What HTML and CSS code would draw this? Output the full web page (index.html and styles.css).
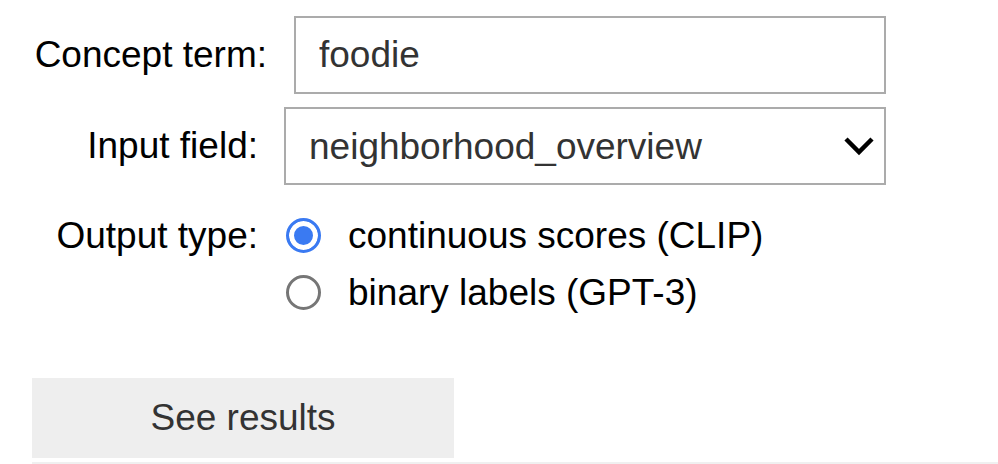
FILE: index.html
```html
<!DOCTYPE html>
<html>
<head>
<meta charset="utf-8">
<link rel="stylesheet" href="styles.css">
</head>
<body>
<div class="form">
  <div class="row">
    <label class="label label-wide" for="term">Concept term:</label>
    <input id="term" class="text-input" type="text" value="foodie">
  </div>
  <div class="row row-select">
    <label class="label" for="field">Input field:</label>
    <div class="select-wrap">
      <select id="field" class="select">
        <option>neighborhood_overview</option>
      </select>
      <svg class="chevron" width="32" height="20" viewBox="0 0 32 20"><path d="M3 3 L16 16 L29 3" fill="none" stroke="#000" stroke-width="4.5"/></svg>
    </div>
  </div>
  <div class="row row-radio">
    <span class="label label-radio">Output type:</span>
    <div class="radio-group">
      <label class="option"><input class="radio" type="radio" name="out" checked><span>continuous scores (CLIP)</span></label>
      <label class="option"><input class="radio" type="radio" name="out"><span>binary labels (GPT-3)</span></label>
    </div>
  </div>
  <button class="button">See results</button>
  <div class="divider"></div>
</div>
</body>
</html>
```
FILE: styles.css
```css
html, body {
  margin: 0;
  background: #fff;
}
body {
  font-family: "Liberation Sans", Arial, Helvetica, sans-serif;
  font-size: 37px;
  color: #000;
}
.form {
  padding: 16px 0 0 32px;
}
.row {
  display: flex;
  align-items: center;
}
.label {
  width: 226px;
  margin-right: 26px;
  text-align: right;
  white-space: nowrap;
  flex: none;
}
.label-wide {
  width: 235px;
  margin-right: 27px;
}
.text-input {
  box-sizing: border-box;
  width: 592px;
  height: 78px;
  border: 2px solid #ababab;
  border-radius: 0;
  padding: 0 23px;
  font: inherit;
  color: #333;
  outline: none;
}
.row-select {
  margin-top: 13px;
}
.select-wrap {
  position: relative;
}
.select {
  box-sizing: border-box;
  width: 602px;
  height: 78px;
  border: 2px solid #ababab;
  border-radius: 0;
  padding: 0 0 0 23px;
  font: inherit;
  color: #333;
  background: #fff;
  -webkit-appearance: none;
  appearance: none;
  outline: none;
}
.chevron {
  position: absolute;
  right: 11px;
  top: 29px;
  pointer-events: none;
}
.row-radio {
  margin-top: 22px;
  align-items: flex-start;
}
.label-radio {
  line-height: 57px;
}
.radio-group {
  display: flex;
  flex-direction: column;
}
.option {
  display: flex;
  align-items: center;
  height: 57px;
}
.radio {
  -webkit-appearance: none;
  appearance: none;
  box-sizing: border-box;
  width: 35px;
  height: 35px;
  margin: 0 27px 0 2px;
  border: 3px solid #767676;
  border-radius: 50%;
  background: #fff;
  flex: none;
}
.radio:checked {
  border-color: #3a7af2;
  background: #3a7af2;
  box-shadow: inset 0 0 0 5px #fff;
}
.button {
  display: block;
  margin-top: 57px;
  width: 422px;
  height: 80px;
  border: none;
  background: #eeeeee;
  color: #333;
  font: inherit;
  padding: 0;
}
.divider {
  margin-top: 4px;
  height: 2px;
  background: #f0f0f0;
}
```
